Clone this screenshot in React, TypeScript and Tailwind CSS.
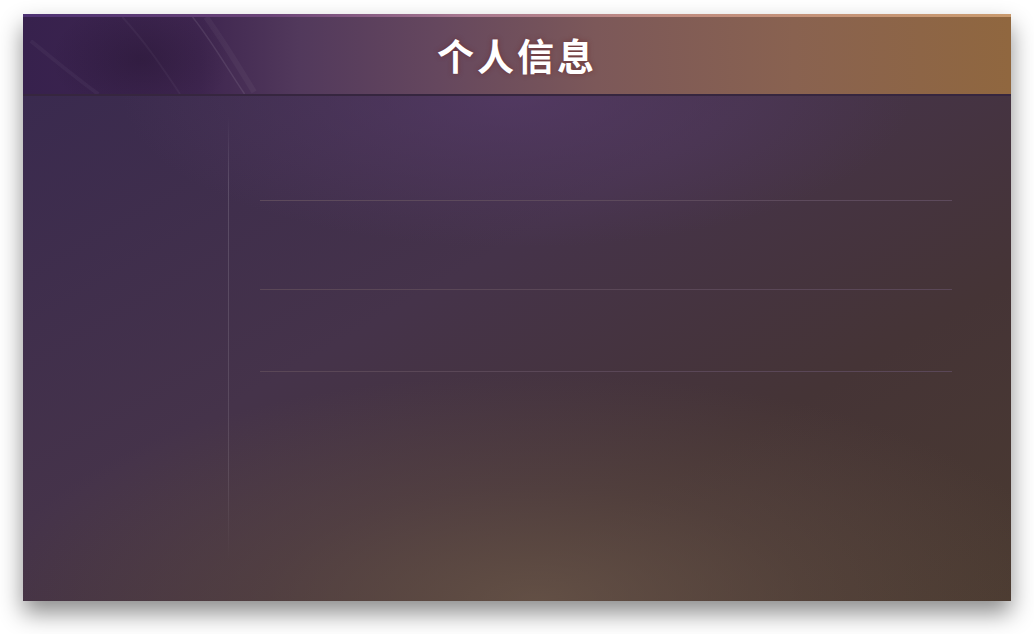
import React from "react";

const rows = ["", "", ""];

const Streaks: React.FC = () => (
  <svg
    className="absolute left-0 top-0 h-full w-[420px] pointer-events-none"
    viewBox="0 0 420 80"
    fill="none"
  >
    <path d="M0 25 C25 45 45 62 70 80" stroke="rgba(255,255,255,0.04)" strokeWidth="4" />
    <path d="M95 0 C118 25 135 50 155 80" stroke="rgba(255,255,255,0.04)" strokeWidth="2" />
    <path d="M168 0 C188 25 205 55 222 80" stroke="rgba(255,255,255,0.09)" strokeWidth="1.5" />
    <path d="M182 0 C200 25 215 50 232 78" stroke="rgba(255,255,255,0.04)" strokeWidth="6" />
  </svg>
);

const App: React.FC = () => {
  return (
    <div className="min-h-[634px] w-[1034px] bg-white pl-[23px] pt-[14px]">
      <div className="flex h-[587px] w-[988px] flex-col shadow-[0_12px_22px_rgba(0,0,0,0.45)]">
        <div className="h-[3px] bg-[linear-gradient(to_right,#4e3273_0%,#6b4478_25%,#a87890_45%,#c08c80_65%,#c99a6e_100%)]" />
        <div className="relative flex h-[77px] items-center justify-center overflow-hidden bg-[linear-gradient(to_right,#37214d_0%,#3f2650_18%,#52395c_28%,#65475e_42%,#7c5859_58%,#896250_78%,#90673f_100%)]">
          <div className="absolute inset-0 bg-[radial-gradient(ellipse_90px_60px_at_12%_55%,rgba(30,15,40,0.35),transparent)]" />
          <Streaks />
          <h1 className="relative font-['Noto_Sans_CJK_SC','Noto_Sans',sans-serif] text-[37px] font-semibold leading-none tracking-[3px] text-white [text-shadow:0_0_5px_rgba(110,40,40,0.7)]">
            个人信息
          </h1>
        </div>
        <div className="h-[2px] bg-[#36263f]" />
        <div className="flex flex-1 bg-[radial-gradient(ellipse_40%_30%_at_50%_0%,rgba(88,60,105,0.7),transparent),radial-gradient(ellipse_55%_45%_at_52%_100%,rgba(108,88,74,0.75)_0%,rgba(108,88,74,0.3)_50%,transparent_100%),linear-gradient(150deg,#3a2a4f_0%,#45334a_40%,#453436_70%,#4a3a30_100%)]">
          <div className="w-[205px]" />
          <div className="mt-[20px] h-[445px] w-px bg-[linear-gradient(to_bottom,transparent,rgba(255,255,255,0.14)_15%,rgba(255,255,255,0.1)_80%,transparent)]" />
          <div className="flex flex-1 flex-col pl-[31px] pr-[59px] pt-[104px]">
            <div className="border-b border-[#5d4a5c]" />
            {rows.slice(1).map((_, i) => (
              <div
                key={i}
                className={`${i === 0 ? "h-[89px]" : "h-[82px]"} border-b border-[#5a4757]`}
              />
            ))}
          </div>
        </div>
      </div>
    </div>
  );
};

export default App;
